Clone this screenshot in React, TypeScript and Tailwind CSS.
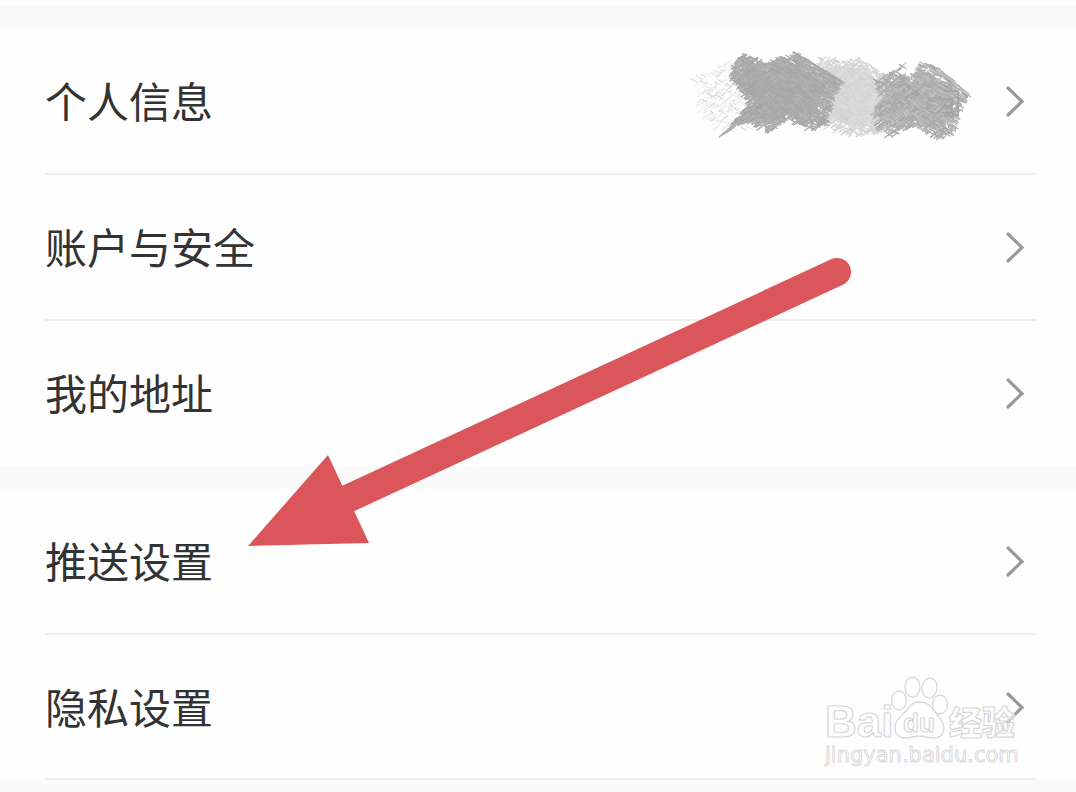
type Row = { label: string; masked?: boolean };

const groups: Row[][] = [
  [{ label: "个人信息", masked: true }, { label: "账户与安全" }, { label: "我的地址" }],
  [{ label: "推送设置" }, { label: "隐私设置" }],
];

function createRandom(seed: number) {
  let state = seed;
  return () => {
    state = (state * 1664525 + 1013904223) % 4294967296;
    return state / 4294967296;
  };
}

type Patch = {
  id: string;
  seed: number;
  count: number;
  points: [number, number][];
  shades: string[];
  base: string;
};

const patches: Patch[] = [
  {
    id: "pale-left",
    seed: 11,
    count: 650,
    points: [[38, 28], [76, 8], [110, 30], [104, 72], [68, 80], [46, 58]],
    shades: ["#e6e6e6", "#dcdcdc", "#f4f4f4", "#ffffff", "#ffffff", "#ededed", "#fafafa"],
    base: "none",
  },
  {
    id: "pale-middle",
    seed: 29,
    count: 900,
    points: [[164, 6], [176, 4], [186, 8], [208, 6], [236, 26], [234, 76], [212, 83], [196, 83], [172, 74]],
    shades: ["#d6d6d6", "#dadada", "#dedede", "#d2d2d2"],
    base: "#d8d8d8",
  },
  {
    id: "dark-left",
    seed: 5,
    count: 2300,
    points: [[80, 10], [90, 0], [112, 11], [126, 5], [136, 4], [143, 0], [188, 28], [178, 47], [173, 70], [159, 77], [134, 66], [114, 80], [110, 70], [106, 76], [92, 68], [68, 82], [96, 50], [77, 25]],
    shades: ["#a9a9a9", "#adadad", "#b4b4b4", "#a5a5a5", "#aaaaaa"],
    base: "#aaaaaa",
  },
  {
    id: "dark-right",
    seed: 47,
    count: 1300,
    points: [[222, 28], [250, 11], [247, 22], [256, 25], [268, 10], [284, 14], [314, 40], [306, 64], [300, 78], [287, 87], [261, 73], [236, 84], [224, 75], [220, 60], [227, 46]],
    shades: ["#acacac", "#b6b6b6", "#b0b0b0", "#c4c4c4", "#a4a4a4"],
    base: "#b1b1b1",
  },
];

function inside(x: number, y: number, points: [number, number][]) {
  let hit = false;
  for (let i = 0, j = points.length - 1; i < points.length; j = i++) {
    const [xi, yi] = points[i];
    const [xj, yj] = points[j];
    if (yi > y !== yj > y && x < ((xj - xi) * (y - yi)) / (yj - yi) + xi) hit = !hit;
  }
  return hit;
}

function hatch(patch: Patch) {
  const random = createRandom(patch.seed);
  const xs = patch.points.map((p) => p[0]);
  const ys = patch.points.map((p) => p[1]);
  const minX = Math.min(...xs);
  const maxX = Math.max(...xs);
  const minY = Math.min(...ys);
  const maxY = Math.max(...ys);
  const lines: { d: string; color: string }[] = [];
  while (lines.length < patch.count) {
    const x = minX + random() * (maxX - minX);
    const y = minY + random() * (maxY - minY);
    const length = 1 + random() * 3;
    const tilt = random();
    const color = patch.shades[Math.floor(random() * patch.shades.length)];
    if (!inside(x, y, patch.points)) continue;
    const right = (x - minX) / (maxX - minX);
    const upper = y < (minY + maxY) / 2;
    const falling = upper ? tilt < right + 0.25 : tilt < right * 0.8;
    const dx = length;
    const dy = falling ? length * 0.62 : -length * 0.75;
    lines.push({
      d: `M${(x - dx).toFixed(1)} ${(y - dy).toFixed(1)}L${(x + dx).toFixed(1)} ${(y + dy).toFixed(1)}`,
      color,
    });
  }
  return lines;
}

const hatched = patches.map((patch) => ({ ...patch, lines: hatch(patch) }));

function shrink(points: [number, number][]) {
  const x = points.reduce((sum, p) => sum + p[0], 0) / points.length;
  const y = points.reduce((sum, p) => sum + p[1], 0) / points.length;
  return points.map((p) => `${x + (p[0] - x) * 0.78},${y + (p[1] - y) * 0.76}`).join(" ");
}

function Scribble() {
  return (
    <svg className="h-24 w-80 shrink-0 overflow-visible" viewBox="0 0 320 96" aria-hidden="true">
      {hatched.map((patch) => (
        <g key={patch.id}>
          <polygon points={shrink(patch.points)} fill={patch.base} />
          {patch.lines.map((line, i) => (
            <path key={i} d={line.d} stroke={line.color} strokeWidth="1.2" />
          ))}
        </g>
      ))}
      <path d="M290 38h14v24h-6M288 46h10M298 46v14h-10M290 53h8" fill="none" stroke="#a0a0a0" strokeWidth="1.5" />
    </svg>
  );
}

function Chevron() {
  return (
    <svg className="h-8 w-5 shrink-0" viewBox="0 0 20 32" fill="none" aria-hidden="true">
      <path d="M2 3L16 16.5L2 30" stroke="#999999" strokeWidth="3.2" strokeLinecap="round" strokeLinejoin="miter" />
    </svg>
  );
}

function Arrow() {
  return (
    <svg
      className="pointer-events-none absolute left-[248px] top-[256px] h-[292px] w-[604px]"
      viewBox="248 256 604 292"
      aria-hidden="true"
    >
      <path d="M345 500L837 272" stroke="#da565b" strokeWidth="28" strokeLinecap="round" />
      <path d="M248 546L328 455L369 543Z" fill="#da565b" />
    </svg>
  );
}

function Watermark() {
  return (
    <svg
      className="pointer-events-none absolute right-[52px] top-[672px] h-[100px] w-[204px]"
      viewBox="820 672 204 100"
      role="img"
      aria-label="Baidu 经验"
    >
      <g fill="#ffffff" fillOpacity="0.7" stroke="#d8d8d8" strokeWidth="1.3" strokeLinejoin="round">
        <ellipse cx="899" cy="700.5" rx="7.5" ry="9.5" />
        <ellipse cx="912.5" cy="687" rx="7.5" ry="10" />
        <ellipse cx="929.5" cy="688" rx="7.5" ry="10" transform="rotate(8 929.5 688)" />
        <ellipse cx="940" cy="704.5" rx="7.5" ry="9.5" />
        <path d="M919 702C911 702 909 708 904 713C899 718 895 721 895 728C895 735 900 738 906 738C911 738 914 736 919 736C925 736 928 738 934 738C940 738 944 734 944 728C944 720 938 717 934 711C930 705 927 702 919 702Z" />
        <g strokeWidth="1.2">
          <text x="825" y="737" className="font-['Liberation_Sans',sans-serif] text-[44px] font-bold">Bai</text>
          <text x="903" y="732" className="font-['Liberation_Sans',sans-serif] text-[26px] font-bold">du</text>
          <text x="949" y="735" className="font-['Noto_Sans_CJK_SC',sans-serif] text-[33px] font-black">经验</text>
        </g>
        <text x="825" y="762" strokeWidth="0.9" className="font-['DejaVu_Sans',sans-serif] text-[21px]">
          jingyan.baidu.com
        </text>
      </g>
    </svg>
  );
}

export default function App() {
  return (
    <main className="relative min-h-screen overflow-hidden bg-[#fafafa] font-['Noto_Sans_CJK_SC',sans-serif] text-[#333333]">
      <div className="h-[6px] bg-[#fefefe]" />
      <nav className="flex flex-col gap-[23px] pt-[23px]">
        {groups.map((rows, g) => (
          <ul key={g} className="bg-[#fefefe]">
            {rows.map((row, i) => {
              const divided = g === 1 || i < rows.length - 1;
              return (
                <li key={row.label} className="pl-[45px] pr-10">
                  <a
                    href="#"
                    className={`flex items-center border-b-2 pr-[10px] ${
                      divided ? "border-[#eeeeee]" : "border-transparent"
                    } ${i === rows.length - 1 ? "h-[145px]" : "h-[146px]"}`}
                  >
                    <span className="grow pb-0.5 text-[42px] leading-[60px]">{row.label}</span>
                    <span className="flex items-center gap-8">
                      {row.masked && <Scribble />}
                      <Chevron />
                    </span>
                  </a>
                </li>
              );
            })}
          </ul>
        ))}
      </nav>
      <Arrow />
      <Watermark />
    </main>
  );
}
